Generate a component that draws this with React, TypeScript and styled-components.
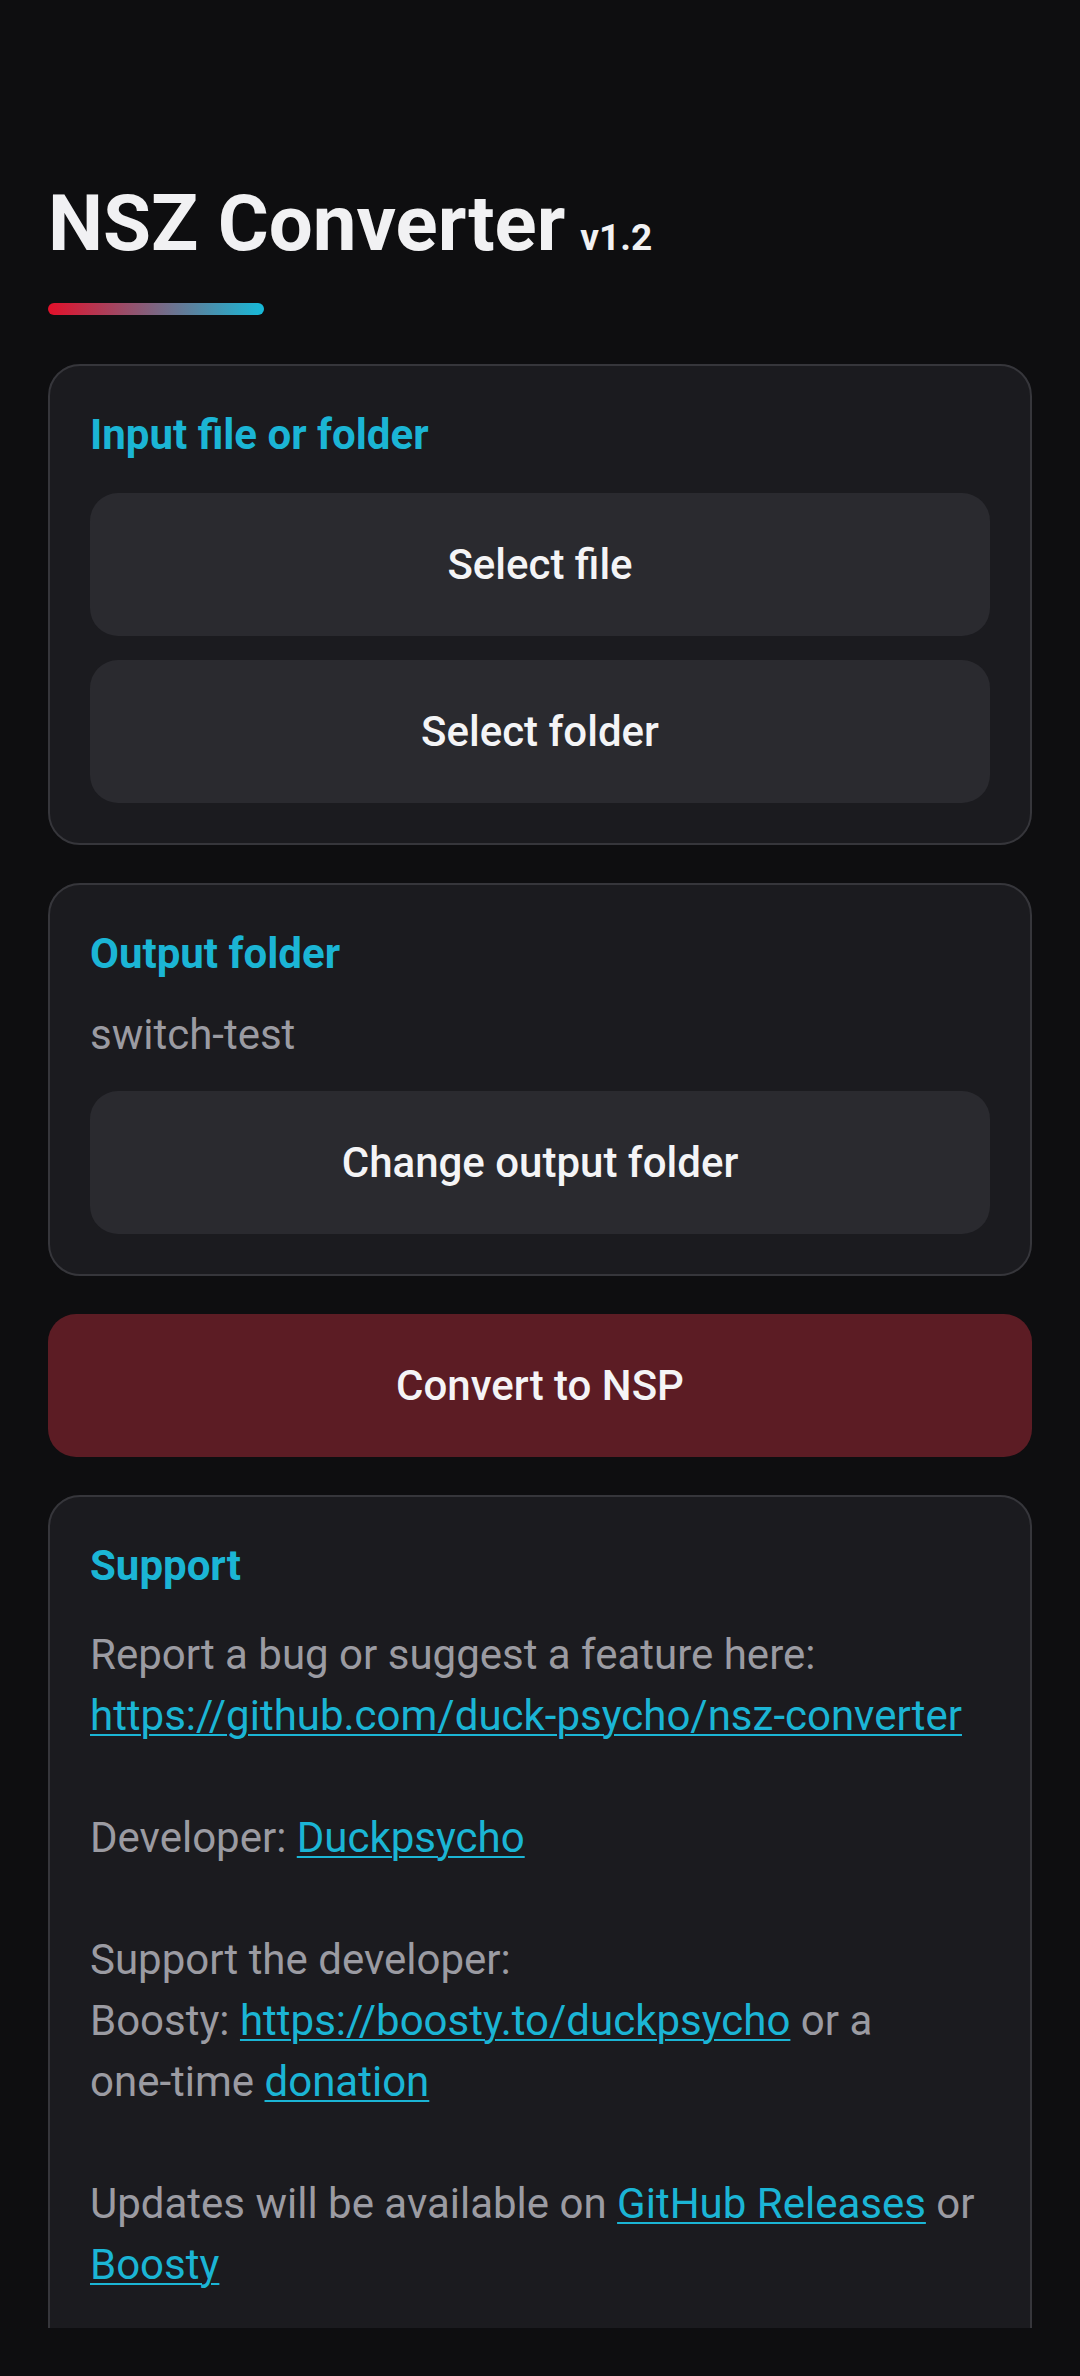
import React from "react";
import styled, { createGlobalStyle } from "styled-components";

const GlobalStyle = createGlobalStyle`
  html, body {
    margin: 0;
    padding: 0;
    background: #0e0e10;
  }
  body {
    font-family: Roboto, "Noto Sans", "Liberation Sans", sans-serif;
    -webkit-font-smoothing: antialiased;
  }
  * {
    box-sizing: border-box;
  }
`;

const Screen = styled.div`
  width: 1080px;
  height: 2376px;
  display: flex;
  flex-direction: column;
  background: #0e0e10;
  overflow: hidden;
`;

const Scroll = styled.main`
  flex: 1;
  min-height: 0;
  overflow: hidden;
  padding: 178px 48px 0;
  display: flex;
  flex-direction: column;
`;

const NavInset = styled.div`
  flex: none;
  height: 48px;
  background: #0e0e10;
`;

const Header = styled.header`
  display: flex;
  flex-direction: column;
`;

const Title = styled.h1`
  margin: 0;
  font-size: 78px;
  line-height: 92px;
  font-weight: 700;
  color: #f1f1f3;
  white-space: nowrap;
`;

const Version = styled.span`
  margin-left: 15px;
  font-size: 37px;
  font-weight: 700;
  color: #f1f1f3;
`;

const AccentBar = styled.div`
  margin-top: 19px;
  width: 216px;
  height: 12px;
  border-radius: 6px;
  background: linear-gradient(90deg, #e3102a 0%, #16bad9 100%);
`;

const Stack = styled.div`
  margin-top: 49px;
  display: flex;
  flex-direction: column;
  gap: 38px;
  flex: none;
`;

const Card = styled.section<{ $tail?: number }>`
  flex: none;
  background: #1b1b1f;
  border: 2px solid #36363b;
  border-radius: 32px;
  padding: 44px 40px ${(p) => p.$tail ?? 40}px;
  display: flex;
  flex-direction: column;
`;

const CardTitle = styled.h2`
  margin: 0 0 34px;
  font-size: 42px;
  line-height: 49px;
  font-weight: 700;
  color: #1bb5d5;
`;

const ButtonGroup = styled.div`
  display: flex;
  flex-direction: column;
  gap: 24px;
`;

const ActionButton = styled.button<{ $tone?: "neutral" | "danger" }>`
  flex: none;
  width: 100%;
  height: 143px;
  border: none;
  border-radius: 28px;
  background: ${(p) => (p.$tone === "danger" ? "#5c1c24" : "#2a2a2f")};
  color: #f4f4f6;
  font-family: inherit;
  font-size: 42px;
  font-weight: 500;
  padding: 0;
  cursor: pointer;
`;

const PathText = styled.div`
  margin: 0 0 33px;
  font-size: 42px;
  line-height: 46px;
  color: #9b9ba2;
`;

const BodyText = styled.p`
  margin: 0;
  font-size: 42px;
  line-height: 61px;
  color: #9b9ba2;
`;

const NoWrap = styled.span`
  white-space: nowrap;
`;

const Link = styled.a`
  color: #1bb5d5;
  text-decoration: underline;
  text-decoration-thickness: 2px;
  text-underline-offset: 4px;
`;

export default function App() {
  return (
    <>
      <GlobalStyle />
      <Screen>
        <Scroll>
          <Header>
            <Title>
              NSZ Converter<Version>v1.2</Version>
            </Title>
            <AccentBar />
          </Header>

          <Stack>
            <Card>
              <CardTitle>Input file or folder</CardTitle>
              <ButtonGroup>
                <ActionButton>Select file</ActionButton>
                <ActionButton>Select folder</ActionButton>
              </ButtonGroup>
            </Card>

            <Card>
              <CardTitle>Output folder</CardTitle>
              <PathText>switch-test</PathText>
              <ActionButton>Change output folder</ActionButton>
            </Card>

            <ActionButton $tone="danger">Convert to NSP</ActionButton>

            <Card $tail={120}>
              <CardTitle>Support</CardTitle>
              <BodyText>
                Report a bug or suggest a feature here:
                <br />
                <Link href="#">https://github.com/duck-psycho/nsz-converter</Link>
                <br />
                <br />
                Developer: <Link href="#">Duckpsycho</Link>
                <br />
                <br />
                Support the developer:
                <br />
                Boosty: <Link href="#">https://boosty.to/duckpsycho</Link> or a{" "}
                <NoWrap>one-time</NoWrap> <Link href="#">donation</Link>
                <br />
                <br />
                Updates will be available on <Link href="#">GitHub Releases</Link> or{" "}
                <Link href="#">Boosty</Link>
              </BodyText>
            </Card>
          </Stack>
        </Scroll>
        <NavInset />
      </Screen>
    </>
  );
}
